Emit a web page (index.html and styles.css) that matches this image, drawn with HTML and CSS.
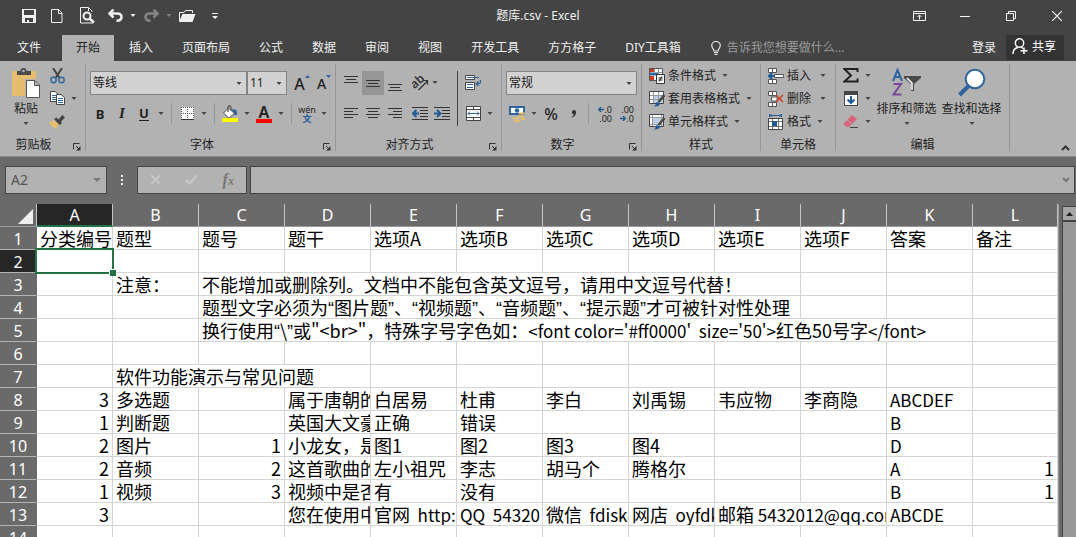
FILE: index.html
```html
<!DOCTYPE html>
<html lang="zh-CN">
<head>
<meta charset="utf-8">
<title>题库.csv - Excel</title>
<link rel="stylesheet" href="styles.css">
</head>
<body>
<svg class="defs" aria-hidden="true">
  <symbol id="caret" viewBox="0 0 5 3"><path d="M0 0H5L2.500 3Z" fill="currentColor"/></symbol>
  <symbol id="launch" viewBox="0 0 8 8"><path d="M.5 6.500V.5H6.500" fill="none" stroke="#333"/><path d="M3 3L6 6" stroke="#333"/><path d="M7.500 3V7.500H3Z" fill="#333"/></symbol>
</svg>
<div class="app">
  <header class="titlebar">
    <div class="quick">
      <button class="tb" aria-label="保存"><svg width="14" height="14" viewBox="0 0 14 14"><path d="M0 0H14V14H0Z" fill="#f0f0f0"/><path d="M2 1H12V6H2ZM3 9H11V13H7V11H5V13H3Z" fill="#444"/></svg></button>
      <button class="tb" aria-label="新建"><svg width="12" height="14" viewBox="0 0 12 14"><path d="M.5.5H7.500L11 4V13.500H.5ZM7.500.5V4.500H11" fill="none" stroke="#f0f0f0"/></svg></button>
      <button class="tb wide" aria-label="打印预览"><svg width="15" height="17" viewBox="0 0 15 17"><path d="M13 16H.5V.5H8.500L12 4V5M8.500.5V4" fill="none" stroke="#f0f0f0"/><circle cx="7" cy="9" r="3.500" fill="none" stroke="#f0f0f0" stroke-width="2"/><path d="M9.500 11.500L14 15.500" stroke="#f0f0f0" stroke-width="2.500"/></svg></button>
      <button class="tb" aria-label="撤消"><svg width="15" height="13" viewBox="0 0 15 13"><path d="M5.500.5L1.500 4.500L5.500 8.500M2 4.500H9C12 4.500 13.500 6 13.500 8C13.500 10.500 12 11.700 8.500 11.700" fill="none" stroke="#f0f0f0" stroke-width="2.500"/></svg></button><svg class="car light"><use href="#caret"/></svg>
      <button class="tb" aria-label="恢复" disabled><svg width="15" height="13" viewBox="0 0 15 13"><path d="M9.500.5L13.500 4.500L9.500 8.500M13 4.500H6C3 4.500 1.500 6 1.500 8C1.500 10.500 3 11.700 6.500 11.700" fill="none" stroke="#858585" stroke-width="2.500"/></svg></button><svg class="car dim"><use href="#caret"/></svg>
      <button class="tb" aria-label="打开"><svg width="17" height="13" viewBox="0 0 17 13"><path d="M.5 12V3.500H5L6.500 1.500H13.500V4" fill="none" stroke="#f0f0f0"/><path d="M3.500 5H16.500L13.500 13H0Z" fill="#f0f0f0"/></svg></button>
      <button class="tb" aria-label="自定义快速访问工具栏"><svg width="6" height="6" viewBox="0 0 6 6"><path d="M0 0H6V1H0ZM0 3H6L3 6Z" fill="#f0f0f0"/></svg></button>
    </div>
    <h1 class="doc">题库.csv - Excel</h1>
    <div class="window">
      <button class="wb" aria-label="功能区显示选项"><svg width="13" height="10" viewBox="0 0 13 10"><path d="M.5.5H12.500V9.500H.5ZM0 2.500H13M6.500 8.500V4M4.500 6L6.500 4L8.500 6" fill="none" stroke="#f4f4f4"/></svg></button>
      <button class="wb" aria-label="最小化"><svg width="10" height="10" viewBox="0 0 10 10"><path d="M0 5.500H10" stroke="#f4f4f4"/></svg></button>
      <button class="wb" aria-label="还原"><svg width="10" height="10" viewBox="0 0 10 10"><path d="M.5 2.500H7.500V9.500H.5ZM2.500 2.500V.5H9.500V7.500H7.500" fill="none" stroke="#f4f4f4"/></svg></button>
      <button class="wb" aria-label="关闭"><svg width="10" height="10" viewBox="0 0 10 10"><path d="M0 0L10 10M10 0L0 10" stroke="#f4f4f4" stroke-width="1.200"/></svg></button>
    </div>
  </header>

  <nav class="tabs">
    <button class="tab file">文件</button>
    <button class="tab active">开始</button>
    <button class="tab">插入</button>
    <button class="tab">页面布局</button>
    <button class="tab">公式</button>
    <button class="tab">数据</button>
    <button class="tab">审阅</button>
    <button class="tab">视图</button>
    <button class="tab">开发工具</button>
    <button class="tab">方方格子</button>
    <button class="tab">DIY工具箱</button>
    <label class="tell"><svg width="10" height="14" viewBox="0 0 10 14"><path d="M3 10C3 8 .7 7 .7 4.500A4.300 4 0 0 1 9.300 4.500C9.300 7 7 8 7 10ZM3 11.500H7M3.500 13.300H6.500" fill="none" stroke="#e4e4e4" stroke-width="1.200"/></svg><input type="text" placeholder="告诉我您想要做什么..." aria-label="告诉我您想要做什么"></label>
    <button class="login">登录</button>
    <button class="share"><svg width="16" height="17" viewBox="0 0 16 17"><circle cx="7.500" cy="5" r="4.200" fill="none" stroke="#fff" stroke-width="1.400"/><path d="M1 16C1 12.500 3 10 6 9.500M9 9L11 10.500M12 9.500V16M8.500 12.700H15.500" fill="none" stroke="#fff" stroke-width="1.500"/></svg>共享</button>
  </nav>

  <section class="ribbon">
    <div class="group clip">
      <div class="body">
        <button class="big paste"><svg width="30" height="30" viewBox="0 0 30 30"><path d="M1 3H25V28H1Z" fill="#e6bd6c"/><path d="M6 7V3H9.500A3 3 0 0 1 15.500 3H20V7Z" fill="#4a4a4a"/><circle cx="12.500" cy="3" r="1.300" fill="#b2b2b2"/><path d="M14 11H24L29 16V30H14Z" fill="#b2b2b2"/><path d="M15.500 12.500H24L28.500 17V29.500H15.500ZM23.500 12.500V17.500H28.500" fill="#fff" stroke="#555"/></svg>粘贴<svg class="car"><use href="#caret"/></svg></button>
        <div class="stack">
          <div class="line"><button class="ib" aria-label="剪切"><svg width="15" height="16" viewBox="0 0 15 16"><path d="M3 0L9.500 10M12 0L5.500 10" stroke="#444" stroke-width="2"/><circle cx="3.500" cy="12" r="2.700" fill="none" stroke="#2f659b" stroke-width="1.400"/><circle cx="11.500" cy="12" r="2.700" fill="none" stroke="#2f659b" stroke-width="1.400"/></svg></button></div>
          <div class="line"><button class="ib" aria-label="复制"><svg width="15" height="15" viewBox="0 0 15 15"><path d="M.5.5H5L8 3V10.500H.5Z" fill="#fff" stroke="#444"/><path d="M2 4.500H6M2 6.500H6M2 8.500H6" stroke="#2f659b"/><path d="M6.500 3.500H11L14.500 6.500V13.500H6.500Z" fill="#fff" stroke="#444"/><path d="M8 7.500H13M8 9.500H13M8 11.500H13" stroke="#2f659b"/></svg></button><svg class="car"><use href="#caret"/></svg></div>
          <div class="line"><button class="ib" aria-label="格式刷"><svg width="16" height="14" viewBox="0 0 16 14"><path d="M0 8L5 5L10 10L6 14Z" fill="#e6bd6c"/><path d="M5 4L7.500 2.500L9.500 4.500L13.500 0L16 2.500L12 6.500L13 8L10.500 10Z" fill="#444"/></svg></button></div>
        </div>
      </div>
      <div class="cap">剪贴板</div><button class="launch" aria-label="剪贴板设置"><svg width="8" height="8"><use href="#launch"/></svg></button>
    </div>

    <div class="group font">
      <div class="body rows">
        <div class="line">
          <div class="combo face"><select aria-label="字体"><option>等线</option></select><svg class="car"><use href="#caret"/></svg></div><div class="combo size"><select aria-label="字号"><option>11</option></select><svg class="car"><use href="#caret"/></svg></div>
          <button class="ib grow" aria-label="增大字号"><span class="ga">A</span><svg width="5" height="3" viewBox="0 0 5 3"><path d="M0 3H5L2.500 0Z" fill="#2f659b"/></svg></button>
          <button class="ib grow" aria-label="减小字号"><span class="ga small">A</span><svg width="5" height="3" viewBox="0 0 5 3"><path d="M0 0H5L2.500 3Z" fill="#2f659b"/></svg></button>
        </div>
        <div class="line">
          <button class="ib"><b>B</b></button><button class="ib"><b class="it">I</b></button><button class="ib"><b class="un">U</b></button><svg class="car"><use href="#caret"/></svg>
          <i class="sep"></i>
          <button class="ib" aria-label="边框"><svg width="13" height="13" viewBox="0 0 13 13"><path d="M0 0H13V13H0Z" fill="#fff"/><path d="M0 .5H13M.5 0V12M12.500 0V12M6.500 0V12M0 6.500H13" stroke="#555" stroke-dasharray="1 1"/><path d="M0 12.500H13" stroke="#333"/></svg></button><svg class="car"><use href="#caret"/></svg>
          <i class="sep"></i>
          <button class="ib" aria-label="填充颜色"><svg width="16" height="17" viewBox="0 0 16 17"><path d="M10 4C15 4 16 7 14.500 10L12 10Z" fill="#2f659b"/><path d="M6.500 3L12.500 8.500L7 13L1.500 8Z" fill="#fff" stroke="#555"/><path d="M6 7V2Q7.500-.5 9 2V6" fill="none" stroke="#555" stroke-width="1.300"/><path d="M0 13H16V17H0Z" fill="#ff0"/></svg></button><svg class="car"><use href="#caret"/></svg>
          <button class="ib color" aria-label="字体颜色"><span>A</span></button><svg class="car"><use href="#caret"/></svg>
          <i class="sep"></i>
          <button class="ib wen" aria-label="拼音"><span>wén</span><span class="zh">文</span></button><svg class="car"><use href="#caret"/></svg>
        </div>
      </div>
      <div class="cap">字体</div><button class="launch" aria-label="字体设置"><svg width="8" height="8"><use href="#launch"/></svg></button>
    </div>

    <div class="group align">
      <div class="body">
        <div class="rows">
          <div class="line">
            <button class="ib" aria-label="顶端对齐"><svg width="14" height="16" viewBox="0 0 14 16"><path d="M0 1.500H14M2 4.500H12M0 7.500H14" stroke="#333"/></svg></button><button class="ib on" aria-label="垂直居中"><svg width="14" height="16" viewBox="0 0 14 16"><path d="M0 5.500H14M2 8.500H12M0 11.500H14" stroke="#333"/></svg></button><button class="ib" aria-label="底端对齐"><svg width="14" height="16" viewBox="0 0 14 16"><path d="M0 9.500H14M2 12.500H12M0 15.500H14" stroke="#333"/></svg></button>
            <button class="ib third" aria-label="方向"><svg width="17" height="16" viewBox="0 0 17 16"><text x="-1" y="11" class="abt" transform="rotate(-42 5 8)">ab</text><path d="M6.500 15L15 6.500M11.500 5.500H15.500V9.500" fill="none" stroke="#333" stroke-width="1.200"/></svg></button><svg class="car"><use href="#caret"/></svg>
          </div>
          <div class="line">
            <button class="ib" aria-label="左对齐"><svg width="14" height="11" viewBox="0 0 14 11"><path d="M0 .5H14M0 3.500H9M0 6.500H14M0 9.500H9" stroke="#333"/></svg></button><button class="ib" aria-label="居中"><svg width="14" height="11" viewBox="0 0 14 11"><path d="M0 .5H14M2 3.500H12M0 6.500H14M2 9.500H12" stroke="#333"/></svg></button><button class="ib" aria-label="右对齐"><svg width="14" height="11" viewBox="0 0 14 11"><path d="M0 .5H14M5 3.500H14M0 6.500H14M5 9.500H14" stroke="#333"/></svg></button>
            <button class="ib third" aria-label="减少缩进"><svg width="16" height="13" viewBox="0 0 16 13"><path d="M0 .5H16M8 3.500H16M8 6.500H16M8 9.500H16M0 12.500H16" stroke="#333"/><path d="M7 6.500H1M4.500 3L1 6.500L4.500 10" fill="none" stroke="#205a96" stroke-width="2"/></svg></button><button class="ib" aria-label="增加缩进"><svg width="16" height="13" viewBox="0 0 16 13"><path d="M0 .5H16M8 3.500H16M8 6.500H16M8 9.500H16M0 12.500H16" stroke="#333"/><path d="M0 6.500H6M3 3L6.500 6.500L3 10" fill="none" stroke="#205a96" stroke-width="2"/></svg></button>
          </div>
        </div>
        <i class="vline"></i>
        <div class="rows">
          <div class="line"><button class="ib" aria-label="自动换行"><svg width="17" height="15" viewBox="0 0 17 15"><path d="M.5.5H9.500V4.500H.5ZM.5 7.500H9.500V14.500H.5Z" fill="#fff" stroke="#444"/><path d="M2 2.500H14M2 9.500H8M2 12.500H8M15.500 5V7Q15.500 9 12 9M13.500 6.500L11 9L13.500 11" fill="none" stroke="#2f659b" stroke-width="1.200"/></svg></button></div>
          <div class="line"><button class="ib" aria-label="合并后居中"><svg width="15" height="15" viewBox="0 0 15 15"><path d="M.5.5H14.500V14.500H.5ZM0 3.500H15M0 11.500H15M7.500 0V3M7.500 12V15" fill="#fff" stroke="#444"/><path d="M2 7.500H13M4 5.500L2 7.500L4 9.500M11 5.500L13 7.500L11 9.500" fill="none" stroke="#2f659b"/></svg></button><svg class="car"><use href="#caret"/></svg></div>
        </div>
      </div>
      <div class="cap">对齐方式</div><button class="launch" aria-label="对齐设置"><svg width="8" height="8"><use href="#launch"/></svg></button>
    </div>

    <div class="group number">
      <div class="body rows">
        <div class="line"><div class="combo fmt"><select aria-label="数字格式"><option>常规</option></select><svg class="car"><use href="#caret"/></svg></div></div>
        <div class="line">
          <button class="ib" aria-label="会计数字格式"><svg width="17" height="16" viewBox="0 0 17 16"><path d="M1 1H15V8H1Z" fill="#fff" stroke="#2f659b" stroke-width="2"/><circle cx="8" cy="4.500" r="2.300" fill="#2f659b"/><path d="M10 7.500H16M9 10.500H15M4 12.500H10M5 15H11M12 13H16" stroke="#e6bd6c" stroke-width="2"/></svg></button><svg class="car"><use href="#caret"/></svg>
          <button class="ib pct">%</button><button class="ib" aria-label="千位分隔样式"><svg width="5" height="8" viewBox="0 0 5 8"><path d="M2.500 0A2.300 2.300 0 0 1 5 2.500C5 5 3.500 7 1 7.500L.7 6.700C2 6 2.800 5.200 2.800 4.500A2.300 2.300 0 0 1 2.500 0Z" fill="#333"/></svg></button>
          <i class="sep"></i>
          <button class="ib dec" aria-label="增加小数位数"><span><svg width="6" height="5" viewBox="0 0 6 5"><path d="M6 2.500H1M3 0L.7 2.500L3 5" fill="none" stroke="#205a96" stroke-width="1.300"/></svg>.0</span><span>.00</span></button><button class="ib dec" aria-label="减少小数位数"><span>.00</span><span><svg width="6" height="5" viewBox="0 0 6 5"><path d="M0 2.500H5M3 0L5.300 2.500L3 5" fill="none" stroke="#205a96" stroke-width="1.300"/></svg>.0</span></button>
        </div>
      </div>
      <div class="cap">数字</div><button class="launch" aria-label="数字设置"><svg width="8" height="8"><use href="#launch"/></svg></button>
    </div>

    <div class="group styles">
      <div class="body stack">
        <button class="item"><svg width="16" height="16" viewBox="0 0 16 16"><path d="M.5.5H13.500V12.500H.5Z" fill="#fff" stroke="#555"/><path d="M1 1H5V4H1ZM1 8H5V12H1Z" fill="#c43e1c"/><path d="M1 4.500H9V7.500H1Z" fill="#2f659b"/><path d="M5.500 1V4M9.500 1V7M9.500 4.500H13" stroke="#999"/><path d="M7.500 6.500H15.500V15.500H7.500Z" fill="#fff" stroke="#333"/><path d="M9.500 10H13.500M9.500 12H13.500M13 8.500L10 13.500" stroke="#222"/></svg>条件格式<svg class="car"><use href="#caret"/></svg></button>
        <button class="item"><svg width="16" height="16" viewBox="0 0 16 16"><path d="M.5.500H14.500V12.500H.5Z" fill="#fff" stroke="#444"/><path d="M5 5H14V12H5Z" fill="#bcd0e6"/><path d="M1 4.500H14M1 8.500H14M4.500 1V12M9.500 1V12" stroke="#999"/><path d="M15.500 4L9.500 11" stroke="#444" stroke-width="2.500"/><path d="M5 15.500Q7 14 7.500 11L11 12Q11 15.500 5 15.500Z" fill="#205a96"/></svg>套用表格格式<svg class="car"><use href="#caret"/></svg></button>
        <button class="item"><svg width="16" height="16" viewBox="0 0 16 16"><path d="M.5.500H14.500V12.500H.5Z" fill="#fff" stroke="#444"/><path d="M4 4H12V10H4Z" fill="#bcd0e6"/><path d="M1 3.500H14M1 10.500H14M3.500 1V12M12.500 1V12" stroke="#999"/><path d="M15.500 4L9.500 11" stroke="#444" stroke-width="2.500"/><path d="M5 15.500Q7 14 7.500 11L11 12Q11 15.500 5 15.500Z" fill="#205a96"/></svg>单元格样式<svg class="car"><use href="#caret"/></svg></button>
      </div>
      <div class="cap">样式</div>
    </div>

    <div class="group cells">
      <div class="body stack">
        <button class="item"><svg width="16" height="16" viewBox="0 0 16 16"><path d="M.5.500H8.500V4.500H.5ZM4.500.5V4.500M.5 11.500H8.500V15.500H.5ZM4.500 11V15M6.500 6.500H15.500V9.500H6.500Z" fill="#fff" stroke="#555"/><path d="M7 8H1M4 5L1 8L4 11" fill="none" stroke="#205a96" stroke-width="2"/></svg>插入<svg class="car end"><use href="#caret"/></svg></button>
        <button class="item"><svg width="16" height="16" viewBox="0 0 16 16"><path d="M.5.500H8.500V4.500H.5ZM4.500.5V4.500M.5 11.500H8.500V15.500H.5ZM4.500 11V15M3.500 6H9V10H3.500Z" fill="#fff" stroke="#555"/><path d="M8 4L15 11M15 4L8 11" stroke="#c8452b" stroke-width="1.700"/></svg>删除<svg class="car end"><use href="#caret"/></svg></button>
        <button class="item"><svg width="16" height="16" viewBox="0 0 16 16"><path d="M1.500 0V3M13.500 0V3M2 1.500H13M3.500.5L2 1.500L3.500 2.500M11.500.5L13 1.500L11.500 2.500" fill="none" stroke="#205a96"/><path d="M.5 4.500H14.500V15.500H.5Z" fill="#fff" stroke="#444"/><path d="M4.500 5V15M10.500 5V15M1 7.500H14M1 12.500H14" stroke="#777"/><path d="M4 7H9V12H4Z" fill="#205a96"/></svg>格式<svg class="car"><use href="#caret"/></svg></button>
      </div>
      <div class="cap">单元格</div>
    </div>

    <div class="group edit">
      <div class="body">
        <div class="stack">
          <div class="line"><button class="ib" aria-label="自动求和"><svg width="16" height="15" viewBox="0 0 16 15"><path d="M14.500 4V1H1.500L8 7.500L1.500 13.500H14.500V10.500" fill="none" stroke="#222" stroke-width="2"/></svg></button><svg class="car"><use href="#caret"/></svg></div>
          <div class="line"><button class="ib" aria-label="填充"><svg width="14" height="15" viewBox="0 0 14 15"><path d="M.5.5H13.500V14.500H.5Z" fill="#fff" stroke="#444"/><path d="M0 0H14V4H0Z" fill="#444"/><path d="M7 5V12M3.500 8.500L7 12L10.500 8.500" fill="none" stroke="#205a96" stroke-width="2"/></svg></button><svg class="car"><use href="#caret"/></svg></div>
          <div class="line"><button class="ib" aria-label="清除"><svg width="15" height="13" viewBox="0 0 15 13"><path d="M0 8L8 0L13 4L5 12H3L0 10Z" fill="#d9637a"/><path d="M3 5L8 9.500" stroke="#b2b2b2"/><path d="M6 12.500H14" stroke="#444"/></svg></button><svg class="car"><use href="#caret"/></svg></div>
        </div>
        <button class="big"><svg width="30" height="30" viewBox="0 0 30 30"><path d="M1 13L5.500 2L10 13M2.500 9H8.500" fill="none" stroke="#2f659b" stroke-width="2"/><path d="M1.500 16H9L1.500 26.500H9.500" fill="none" stroke="#7c459b" stroke-width="2"/><path d="M12 8H29V10L22 16V23H19V16L12 10Z" fill="#4a4a4a"/><path d="M15 10L20 15V22" fill="none" stroke="#fff" stroke-width="1.500"/></svg>排序和筛选<svg class="car"><use href="#caret"/></svg></button>
        <button class="big"><svg width="30" height="30" viewBox="0 0 30 30"><path d="M2.500 27L13 16.500" stroke="#2f659b" stroke-width="4"/><circle cx="18" cy="11" r="9.300" fill="#fff" stroke="#2f659b" stroke-width="2"/></svg>查找和选择<svg class="car"><use href="#caret"/></svg></button>
      </div>
      <div class="cap">编辑</div>
    </div>
    <button class="collapse" aria-label="折叠功能区"><svg width="9" height="6" viewBox="0 0 9 6"><path d="M1 5L4.500 1.500L8 5" fill="none" stroke="#333" stroke-width="2"/></svg></button>
  </section>

  <section class="formula">
    <div class="name"><input type="text" value="A2" aria-label="名称框"><svg class="drop" viewBox="0 0 8 4"><path d="M0 0H8L4 4Z" fill="#777"/></svg></div>
    <svg class="grip" width="2" height="10" viewBox="0 0 2 10"><path d="M0 0H2V2H0ZM0 4H2V6H0ZM0 8H2V10H0Z" fill="#eee"/></svg>
    <div class="fx">
      <button aria-label="取消"><svg width="11" height="11" viewBox="0 0 11 11"><path d="M1 1L10 10M10 1L1 10" stroke="#c6c6c6" stroke-width="2"/></svg></button>
      <button aria-label="输入"><svg width="13" height="11" viewBox="0 0 13 11"><path d="M1 6L4.500 9.500L12 1" fill="none" stroke="#c6c6c6" stroke-width="2.500"/></svg></button>
      <button class="fn" aria-label="插入函数">f<small>x</small></button>
    </div>
    <div class="entry"><input type="text" aria-label="编辑栏"><svg width="8" height="6" viewBox="0 0 8 6"><path d="M1 1L4 4L7 1" fill="none" stroke="#777" stroke-width="2"/></svg></div>
  </section>

  <main class="sheet">
    <div class="viewport">
      <table>
        <colgroup><col class="c0"><col class="ca"><col class="c"><col class="c"><col class="c"><col class="c"><col class="c"><col class="c"><col class="c"><col class="c"><col class="c"><col class="c"><col></colgroup>
        <thead><tr><th class="corner"><svg width="15" height="15" viewBox="0 0 15 15"><path d="M15 0V15H0Z" fill="#f0f0f0"/></svg></th><th class="cur">A</th><th>B</th><th>C</th><th>D</th><th>E</th><th>F</th><th>G</th><th>H</th><th>I</th><th>J</th><th>K</th><th>L</th></tr></thead>
        <tbody>
          <tr><th>1</th><td>分类编号</td><td>题型</td><td>题号</td><td>题干</td><td>选项A</td><td>选项B</td><td>选项C</td><td>选项D</td><td>选项E</td><td>选项F</td><td>答案</td><td>备注</td></tr>
          <tr><th class="cur">2</th><td class="sel"></td><td></td><td></td><td></td><td></td><td></td><td></td><td></td><td></td><td></td><td></td><td></td></tr>
          <tr><th>3</th><td></td><td>注意：</td><td colspan="7">不能增加或删除列。文档中不能包含英文逗号，请用中文逗号代替！</td><td></td><td></td><td></td></tr>
          <tr><th>4</th><td></td><td></td><td colspan="7">题型文字必须为<q>图片题</q>、<q>视频题</q>、<q>音频题</q>、<q>提示题</q>才可被针对性处理</td><td></td><td></td><td></td></tr>
          <tr><th>5</th><td></td><td></td><td colspan="9">换行使用<q>\</q>或"&lt;br&gt;"，特殊字号字色如：<span class="lat">&lt;font color='#ff0000'&nbsp; size='50'&gt;</span>红色50号字<span class="lat">&lt;/font&gt;</span></td><td></td></tr>
          <tr><th>6</th><td></td><td></td><td></td><td></td><td></td><td></td><td></td><td></td><td></td><td></td><td></td><td></td></tr>
          <tr><th>7</th><td></td><td colspan="3">软件功能演示与常见问题</td><td></td><td></td><td></td><td></td><td></td><td></td><td></td><td></td></tr>
          <tr><th>8</th><td class="n">3</td><td>多选题</td><td></td><td>属于唐朝的</td><td>白居易</td><td>杜甫</td><td>李白</td><td>刘禹锡</td><td>韦应物</td><td>李商隐</td><td><span class="lat">ABCDEF</span></td><td></td></tr>
          <tr><th>9</th><td class="n">1</td><td>判断题</td><td></td><td>英国大文豪</td><td>正确</td><td>错误</td><td></td><td></td><td></td><td></td><td><span class="lat">B</span></td><td></td></tr>
          <tr><th>10</th><td class="n">2</td><td>图片</td><td class="n">1</td><td>小龙女，是</td><td>图1</td><td>图2</td><td>图3</td><td>图4</td><td></td><td></td><td><span class="lat">D</span></td><td></td></tr>
          <tr><th>11</th><td class="n">2</td><td>音频</td><td class="n">2</td><td>这首歌曲的</td><td>左小祖咒</td><td>李志</td><td>胡马个</td><td>腾格尔</td><td></td><td></td><td><span class="lat">A</span></td><td class="n">1</td></tr>
          <tr><th>12</th><td class="n">1</td><td>视频</td><td class="n">3</td><td>视频中是否</td><td>有</td><td>没有</td><td></td><td></td><td></td><td></td><td><span class="lat">B</span></td><td class="n">1</td></tr>
          <tr><th>13</th><td class="n">3</td><td></td><td></td><td>您在使用中</td><td>官网<span class="lat">&nbsp; http:</span></td><td><span class="lat">QQ&nbsp; 54320</span></td><td>微信<span class="lat">&nbsp; fdiske</span></td><td>网店<span class="lat">&nbsp; oyfdk</span></td><td colspan="2">邮箱<span class="lat"> 5432012@qq.com</span></td><td><span class="lat">ABCDE</span></td><td></td></tr>
          <tr><th>14</th><td></td><td></td><td></td><td></td><td></td><td></td><td></td><td></td><td></td><td></td><td></td><td></td></tr>
        </tbody>
      </table>
    </div>
    <div class="scroll"><button aria-label="向上滚动"><svg width="7" height="4" viewBox="0 0 7 4"><path d="M0 4H7L3.500 0Z" fill="#222"/></svg></button><div class="thumb"></div></div>
  </main>
</div>
</body>
</html>
```
FILE: styles.css
```css
* { box-sizing: border-box; }
body { margin: 0; background: #6a6a6a; font: 12px/16px "Noto Sans", "Noto Sans CJK SC", sans-serif; color: #222; }
button, input, select { font: inherit; color: inherit; background: none; border: 0; padding: 0; margin: 0; }
svg { display: block; flex: none; }
.defs { position: absolute; width: 0; height: 0; }
.app { display: flex; flex-direction: column; height: 100vh; overflow: hidden; }
.car { width: 12px; height: 3px; color: #444; }
.car.light { color: #f0f0f0; }
.car.dim { color: #858585; }

.titlebar { display: grid; grid-template-columns: 1fr auto 1fr; align-items: center; height: 35px; padding-bottom: 4px; background: #444; color: #f0f0f0; flex: none; }
.quick { display: flex; align-items: center; padding-left: 17px; }
.tb { display: flex; align-items: center; justify-content: center; width: 24px; height: 24px; margin-right: 4px; }
.tb.wide { width: 28px; }
.tb:has(+ .car) { margin-right: 0; }
.tb.wide + .tb { margin-left: -2px; }
.doc { margin: 0; font-size: 12px; font-weight: 400; }
.window { display: flex; justify-content: flex-end; gap: 8px; }
.wb { display: flex; align-items: center; justify-content: center; width: 38px; height: 28px; }

.tabs { display: flex; height: 26px; padding-left: 3px; background: #444; color: #f0f0f0; flex: none; }
.tab { padding: 0 14px; margin-right: 1px; white-space: nowrap; }
.tab.file { margin-right: 7px; }
.tab.active { background: #b2b2b2; color: #222; }
.tell { display: flex; align-items: center; flex: 1; gap: 6px; padding-left: 15px; min-width: 0; }
.tell input { flex: 1; min-width: 0; }
.tell input::placeholder { color: #9a9a9a; opacity: 1; }
.login { padding: 0 10px; }
.share { display: flex; align-items: center; gap: 4px; height: 25px; padding: 0 8px 2px 6px; margin-right: 12px; background: #333; color: #fff; }

.ribbon { display: flex; height: 95px; padding: 3px 0 5px; background: #b2b2b2; flex: none; }
.group { position: relative; display: flex; flex-direction: column; border-right: 1px solid #969696; flex: none; }
.body { display: flex; height: 73px; flex: none; }
.rows { display: flex; flex-direction: column; gap: 6px; padding-top: 6px; }
.stack { display: flex; flex-direction: column; }
.line { display: flex; align-items: center; height: 25px; }
.stack .line, .item { height: 23px; }
.cap { height: 16px; text-align: center; }
.launch { position: absolute; right: 4px; bottom: 0; }
.ib { display: flex; align-items: center; justify-content: center; width: 22px; height: 24px; flex: none; }
.ib.on { background: #969696; }
.ib b { font-size: 13px; }
.ib .it { font: italic 700 15px "Liberation Serif", serif; }
.un { border-bottom: 1px solid #222; line-height: 13px; }
.sep { width: 9px; height: 21px; flex: none; border-left: 1px solid #969696; margin-left: 4px; margin-right: -4px; }
.big { display: flex; flex-direction: column; align-items: center; height: 66px; margin-top: 4px; white-space: nowrap; }
.big .car { margin-top: 5px; }
.big > svg:first-child { margin-bottom: 3px; }
.item { display: flex; align-items: center; gap: 3px; white-space: nowrap; }
.clip { width: 86px; }
.paste { margin-left: 11px; margin-right: 5px; }
.clip .cap { padding-right: 18px; }
.font { width: 250px; padding-left: 3px; }
.font .cap { padding-right: 20px; }
.align { width: 166px; padding-left: 4px; }
.align .cap { padding-right: 22px; }
.number { width: 140px; padding-left: 4px; }
.number .cap { padding-right: 22px; }
.styles { width: 119px; padding-left: 7px; }
.cells { width: 75px; padding-left: 7px; }
.cells .car.end { margin-left: 3px; }
.styles .cap, .cells .cap { padding-right: 7px; }
.edit { width: 174px; padding-left: 4px; }
.edit .cap { padding-right: 4px; }
.edit .big { width: 65px; }
.combo { position: relative; height: 24px; }
.combo select { appearance: none; width: 100%; height: 24px; padding: 0 2px; border: 1px solid #848484; background: #d2d2d2; }
.combo .car { position: absolute; right: 2px; top: 11px; pointer-events: none; }
.face { width: 157px; margin-left: 1px; }
.size { width: 40px; margin-right: 4px; }
.fmt { width: 131px; }
.grow { align-items: flex-start; padding-top: 2px; }
.ga { font-size: 16px; line-height: 22px; font-weight: 500; }
.ga.small { font-size: 14px; line-height: 22px; }
.grow svg { margin-top: 2px; }
.color span { font-size: 16px; font-weight: 600; line-height: 14px; border-bottom: 4px solid #f00; width: 16px; text-align: center; }
.wen { flex-direction: column; font-size: 9px; line-height: 9px; }
.wen .zh { color: #205a96; font-weight: 700; }
.abt { font-size: 12px; font-weight: 600; fill: #333; }
.third { margin-left: 3px; }
.third + .car { margin-left: -2px; }
.vline { width: 1px; height: 55px; margin: 7px 4px 0; background: #444; flex: none; }
.pct { font-size: 16px; font-weight: 500; }
.dec { flex-direction: column; align-items: flex-end; padding-right: 3px; font-size: 9px; line-height: 9px; }
.dec span { display: flex; align-items: center; }
.collapse { margin: auto 6px 0 auto; }

.formula { display: flex; align-items: center; height: 48px; padding: 0 1px 2px 5px; border-top: 1px solid #8c8c8c; flex: none; }
.name, .fx, .entry { display: flex; align-items: center; height: 28px; background: #b2b2b2; border: 1px solid #444; }
.name { width: 102px; padding: 0 5px; }
.name input { flex: 1; min-width: 0; font-size: 14px; color: #555; }
.drop { width: 8px; height: 4px; }
.grip { margin: 0 14px; }
.fx { width: 110px; justify-content: space-around; }
.fn { font: italic 700 16px "Liberation Serif", serif; color: #777; }
.fn small { font-size: 12px; }
.entry { flex: 1; margin-left: 3px; padding-right: 4px; }
.entry input { flex: 1; min-width: 0; font-size: 14px; }

.sheet { display: flex; flex: 1; min-height: 0; }
.viewport { flex: 1; overflow: hidden; border-right: 1px solid #999; }
table { width: 100%; table-layout: fixed; border-collapse: separate; border-spacing: 0; background: #fff; }
.c0 { width: 37px; }
.ca { width: 76px; }
.c { width: 86px; }
th, td { height: 23px; padding: 0; }
th { background: #6a6a6a; color: #fff; font: 16px/20px "Noto Sans", sans-serif; border-right: 1px solid #c4c4c4; border-bottom: 1px solid #999; }
tbody th { padding-top: 1px; border-right-color: #6a6a6a; border-bottom-color: #b4b4b4; }
th.cur { background: #262626; }
thead .cur { border-bottom: 2px solid #217346; }
.corner svg { margin: 2px 0 0 18px; }
td { position: relative; overflow: hidden; white-space: nowrap; padding: 1px 0 0 3px; font: 18px/21px "Noto Sans CJK SC", sans-serif; color: #000; border-right: 1px solid #d4d4d4; border-bottom: 1px solid #d4d4d4; }
td.n { text-align: right; padding-right: 3px; }
.lat { font-size: 17px; line-height: 16px; }
q { quotes: "“" "”"; }
q::before, q::after { font: 18px/12px "Liberation Sans", sans-serif; }
.sel { overflow: visible; z-index: 1; }
.sel::before { content: ""; position: absolute; inset: -2px; border: 2px solid #217346; }
.sel::after { content: ""; position: absolute; right: -4px; bottom: -4px; width: 6px; height: 6px; background: #217346; border: solid #fff; border-width: 1px 0 0 1px; }
.scroll { width: 14px; margin-left: 3px; padding-top: 2px; flex: none; display: flex; flex-direction: column; }
.scroll button { display: flex; align-items: center; justify-content: center; height: 15px; background: #a6a6a6; border: 1px solid #444; border-right: 0; }
.thumb { flex: 1; background: #999; border-left: 1px solid #444; border-top: 1px solid #444; }
```
